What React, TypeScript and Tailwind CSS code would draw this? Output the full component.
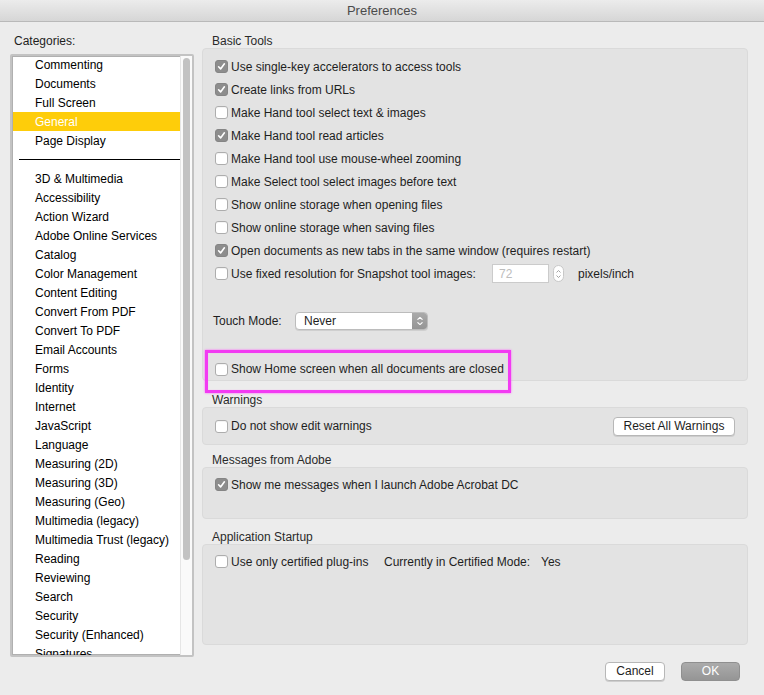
import React from 'react'

const topCategories = ['Commenting', 'Documents', 'Full Screen', 'General', 'Page Display']
const moreCategories = [
  '3D & Multimedia', 'Accessibility', 'Action Wizard', 'Adobe Online Services', 'Catalog',
  'Color Management', 'Content Editing', 'Convert From PDF', 'Convert To PDF', 'Email Accounts',
  'Forms', 'Identity', 'Internet', 'JavaScript', 'Language', 'Measuring (2D)', 'Measuring (3D)',
  'Measuring (Geo)', 'Multimedia (legacy)', 'Multimedia Trust (legacy)', 'Reading', 'Reviewing',
  'Search', 'Security', 'Security (Enhanced)', 'Signatures',
]

const basicTools = [
  { label: 'Use single-key accelerators to access tools', checked: true },
  { label: 'Create links from URLs', checked: true },
  { label: 'Make Hand tool select text & images', checked: false },
  { label: 'Make Hand tool read articles', checked: true },
  { label: 'Make Hand tool use mouse-wheel zooming', checked: false },
  { label: 'Make Select tool select images before text', checked: false },
  { label: 'Show online storage when opening files', checked: false },
  { label: 'Show online storage when saving files', checked: false },
  { label: 'Open documents as new tabs in the same window (requires restart)', checked: true },
]

const Checkbox = ({ checked }: { checked?: boolean }) => (
  <span
    className={
      checked
        ? 'flex h-[13px] w-[13px] shrink-0 items-center justify-center rounded-[3px] border border-[#858585] bg-[#8d8d8d]'
        : 'flex h-[13px] w-[13px] shrink-0 items-center justify-center rounded-[3px] border border-[#adadad] bg-white shadow-[inset_0_1px_0_#f4f4f4]'
    }
  >
    {checked && (
      <svg width="9" height="9" viewBox="0 0 9 9">
        <path d="M1.6 4.8 L3.6 6.9 L7.4 1.8" fill="none" stroke="white" strokeWidth="1.6" strokeLinecap="round" strokeLinejoin="round" />
      </svg>
    )}
  </span>
)

const CheckRow = ({ label, checked }: { label: string; checked?: boolean }) => (
  <div className="flex h-[23px] items-center gap-[3px]">
    <Checkbox checked={checked} />
    <span className="whitespace-nowrap">{label}</span>
  </div>
)

const SectionLabel = ({ children, className }: { children: React.ReactNode; className?: string }) => (
  <div className={`h-[14px] pl-[10px] leading-[14px] text-[#2a2a2a] ${className ?? ''}`}>{children}</div>
)

export default function App() {
  return (
    <div className="h-[695px] w-[764px] overflow-hidden bg-[#ececec] font-['Liberation_Sans',Arial,sans-serif] text-[12px] text-[#1e1e1e]">
      {/* title bar */}
      <div className="flex h-[22px] items-center justify-center border-b border-[#b9b9b9] bg-gradient-to-b from-[#ececec] to-[#d6d6d6] text-[13px] text-[#4b4b4b]">
        Preferences
      </div>

      <div className="flex px-[10px]">
        {/* categories */}
        <div className="w-[184px] shrink-0 pt-[12px]">
          <div className="h-[14px] pl-[4px] leading-[14px]">Categories:</div>
          <div className="mt-[6px] flex h-[603px] overflow-hidden rounded-[2px] border-2 border-[#c3c3c3] bg-white shadow-[inset_0_0_0_1px_#b0b0b0]">
            <div className="flex-1 overflow-hidden">
              <div className="-mt-px ml-[1px]">
                {topCategories.map((c) => (
                  <div
                    key={c}
                    className={
                      c === 'General'
                        ? 'flex h-[19px] items-center bg-[#fecd0a] pl-[22px] text-white'
                        : 'flex h-[19px] items-center pl-[22px] text-black'
                    }
                  >
                    {c}
                  </div>
                ))}
                <div className="flex h-[19px] items-center pl-[6px]">
                  <div className="h-px w-full bg-black" />
                </div>
                {moreCategories.map((c) => (
                  <div key={c} className="flex h-[19px] items-center whitespace-nowrap pl-[22px] text-black">
                    {c}
                  </div>
                ))}
              </div>
            </div>
            <div className="w-[12px] shrink-0 border-l border-[#e6e6e6] bg-[#fafafa] pt-[2px]">
              <div className="ml-[2px] h-[502px] w-[7px] rounded-full bg-[#c2c2c2]" />
            </div>
          </div>
        </div>

        {/* settings */}
        <div className="ml-[8px] w-[546px] shrink-0 pt-[12px]">
          <SectionLabel>Basic Tools</SectionLabel>
          <div className="relative h-[333px] rounded-[4px] border border-[#dadada] bg-[#e3e3e3] pl-[12px] pt-[6px]">
            {basicTools.map((t) => (
              <CheckRow key={t.label} label={t.label} checked={t.checked} />
            ))}
            <div className="flex h-[23px] items-center">
              <div className="flex w-[277px] items-center gap-[3px]">
                <Checkbox />
                <span className="whitespace-nowrap">Use fixed resolution for Snapshot tool images:</span>
              </div>
              <div className="flex h-[19px] w-[57px] items-center border border-[#cbcbcb] bg-white pl-[6px] text-[#bdbdbd]">72</div>
              <div className="ml-[4px] flex h-[17px] w-[11px] flex-col items-center justify-center gap-[2px] rounded-full border border-[#c8c8c8] bg-white">
                <svg width="5" height="3" viewBox="0 0 5 3"><path d="M0.5 2.5 L2.5 0.5 L4.5 2.5" fill="none" stroke="#9a9a9a" strokeWidth="0.9" /></svg>
                <svg width="5" height="3" viewBox="0 0 5 3"><path d="M0.5 0.5 L2.5 2.5 L4.5 0.5" fill="none" stroke="#9a9a9a" strokeWidth="0.9" /></svg>
              </div>
              <span className="ml-[14px]">pixels/inch</span>
            </div>

            <div className="-ml-[2px] mt-[24px] flex h-[23px] items-center">
              <span className="w-[82px]">Touch Mode:</span>
              <div className="flex h-[18px] w-[133px] overflow-hidden rounded-[4px] border border-[#bcbcbc] bg-white shadow-[0_1px_0_#cfcfcf]">
                <span className="flex flex-1 items-center pl-[8px]">Never</span>
                <span className="flex w-[15px] flex-col items-center justify-center gap-[2px] bg-gradient-to-b from-[#aaaaaa] to-[#959595]">
                  <svg width="6" height="3" viewBox="0 0 6 3"><path d="M0.5 2.7 L3 0.4 L5.5 2.7" fill="none" stroke="white" strokeWidth="1.1" /></svg>
                  <svg width="6" height="3" viewBox="0 0 6 3"><path d="M0.5 0.3 L3 2.6 L5.5 0.3" fill="none" stroke="white" strokeWidth="1.1" /></svg>
                </span>
              </div>
            </div>

            <div className="mt-[27px] flex h-[20px] items-center gap-[3px]">
              <Checkbox />
              <span className="whitespace-nowrap">Show Home screen when all documents are closed</span>
            </div>

            {/* highlight annotation */}
            <div className="pointer-events-none absolute left-[2px] top-[301px] h-[43px] w-[306px] border-[3px] border-[#f23bf2] shadow-[0_0_2px_#ff5cff,inset_0_0_1px_#ff9cff]" />
          </div>

          <SectionLabel className="mt-[12px]">Warnings</SectionLabel>
          <div className="flex h-[38px] items-center justify-between rounded-[4px] border border-[#dadada] bg-[#e3e3e3] pl-[12px] pr-[12px]">
            <div className="flex items-center gap-[3px]">
              <Checkbox />
              <span>Do not show edit warnings</span>
            </div>
            <button className="h-[19px] w-[122px] rounded-[4px] border border-[#b7b7b7] bg-white leading-[17px] shadow-[0_1px_0_#cdcdcd]">
              Reset All Warnings
            </button>
          </div>

          <SectionLabel className="mt-[8px]">Messages from Adobe</SectionLabel>
          <div className="h-[52px] rounded-[4px] border border-[#dadada] bg-[#e3e3e3] pl-[12px] pt-[5px]">
            <CheckRow label="Show me messages when I launch Adobe Acrobat DC" checked />
          </div>

          <SectionLabel className="mt-[11px]">Application Startup</SectionLabel>
          <div className="h-[101px] rounded-[4px] border border-[#dadada] bg-[#e3e3e3] pl-[12px] pt-[5px]">
            <div className="flex h-[23px] items-center">
              <div className="flex w-[169px] items-center gap-[3px]">
                <Checkbox />
                <span className="whitespace-nowrap">Use only certified plug-ins</span>
              </div>
              <span className="w-[157px] whitespace-nowrap">Currently in Certified Mode:</span>
              <span>Yes</span>
            </div>
          </div>

          <div className="mt-[17px] flex justify-end gap-[16px] pr-[8px]">
            <button className="h-[19px] w-[60px] rounded-[4px] border border-[#b7b7b7] bg-white leading-[17px] shadow-[0_1px_0_#cdcdcd]">
              Cancel
            </button>
            <button className="h-[19px] w-[59px] rounded-[4px] border border-[#8f8f8f] bg-gradient-to-b from-[#ababab] to-[#959595] leading-[17px] text-white">
              OK
            </button>
          </div>
        </div>
      </div>
    </div>
  )
}
